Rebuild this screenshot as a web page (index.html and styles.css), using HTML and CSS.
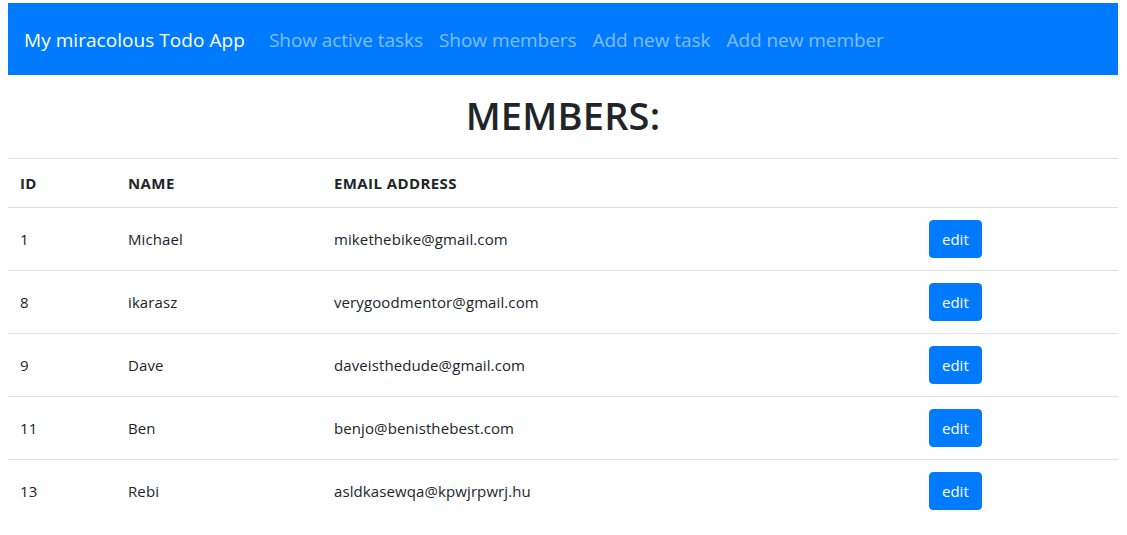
FILE: index.html
```html
<!DOCTYPE html>
<html lang="en">
<head>
<meta charset="utf-8">
<title>My miracolous Todo App</title>
<link rel="stylesheet" href="styles.css">
</head>
<body>
<div class="page">
  <nav class="navbar">
    <a class="brand" href="#">My miracolous Todo App</a>
    <ul class="nav">
      <li><a class="nav-link" href="#">Show active tasks</a></li>
      <li><a class="nav-link" href="#">Show members</a></li>
      <li><a class="nav-link" href="#">Add new task</a></li>
      <li><a class="nav-link" href="#">Add new member</a></li>
    </ul>
  </nav>
  <h1 class="title">MEMBERS:</h1>
  <table class="table">
    <thead>
      <tr>
        <th class="c-id">ID</th>
        <th class="c-name">NAME</th>
        <th class="c-email">EMAIL ADDRESS</th>
        <th class="c-act"></th>
      </tr>
    </thead>
    <tbody>
      <tr><td>1</td><td>Michael</td><td>mikethebike@gmail.com</td><td><button class="btn">edit</button></td></tr>
      <tr><td>8</td><td>ikarasz</td><td>verygoodmentor@gmail.com</td><td><button class="btn">edit</button></td></tr>
      <tr><td>9</td><td>Dave</td><td>daveisthedude@gmail.com</td><td><button class="btn">edit</button></td></tr>
      <tr><td>11</td><td>Ben</td><td>benjo@benisthebest.com</td><td><button class="btn">edit</button></td></tr>
      <tr><td>13</td><td>Rebi</td><td>asldkasewqa@kpwjrpwrj.hu</td><td><button class="btn">edit</button></td></tr>
    </tbody>
  </table>
</div>
</body>
</html>
```
FILE: styles.css
```css
* { box-sizing: border-box; }
html, body { margin: 0; padding: 0; background: #fff; }
body {
  font-family: "Open Sans", "Noto Sans", "Liberation Sans", sans-serif;
  font-size: 16px;
  line-height: 1.5;
  color: #212529;
}
.page {
  width: 1110px;
  margin-left: 8px;
  padding-top: 3px;
}
.navbar {
  display: flex;
  align-items: center;
  background: #007bff;
  height: 72px;
  padding: 2px 16px 0;
}
.brand {
  color: #fff;
  font-size: 19px;
  line-height: 30px;
  text-decoration: none;
  margin-right: 16px;
  letter-spacing: 0.05px;
}
.nav {
  display: flex;
  list-style: none;
  margin: 0;
  padding: 0;
}
.nav-link {
  display: block;
  padding: 0 8px;
  color: rgba(255,255,255,.5);
  font-size: 19px;
  letter-spacing: -0.05px;
  text-decoration: none;
}
.title {
  margin: 16px 0 19px;
  text-align: center;
  font-size: 38px;
  font-weight: 600;
  line-height: 48px;
  letter-spacing: 0.2px;
}
.table {
  width: 1110px;
  border-collapse: collapse;
  table-layout: fixed;
}
.table th, .table td {
  padding: 12px;
  border-top: 1px solid #dee2e6;
  text-align: left;
  vertical-align: middle;
  font-size: 15px;
}
.table th {
  font-weight: 700;
  line-height: 24px;
  letter-spacing: 0.4px;
}
.table td { line-height: 24px; letter-spacing: 0.1px; }
.c-id { width: 108px; }
.c-name { width: 206px; }
.c-email { width: 595px; }
.c-act { width: 201px; }
.btn {
  display: inline-block;
  font-family: inherit;
  font-size: 15px;
  line-height: 24px;
  padding: 6px 12px;
  height: 38px;
  color: #fff;
  background: #007bff;
  border: 1px solid #007bff;
  border-radius: 4px;
  cursor: pointer;
}
```
